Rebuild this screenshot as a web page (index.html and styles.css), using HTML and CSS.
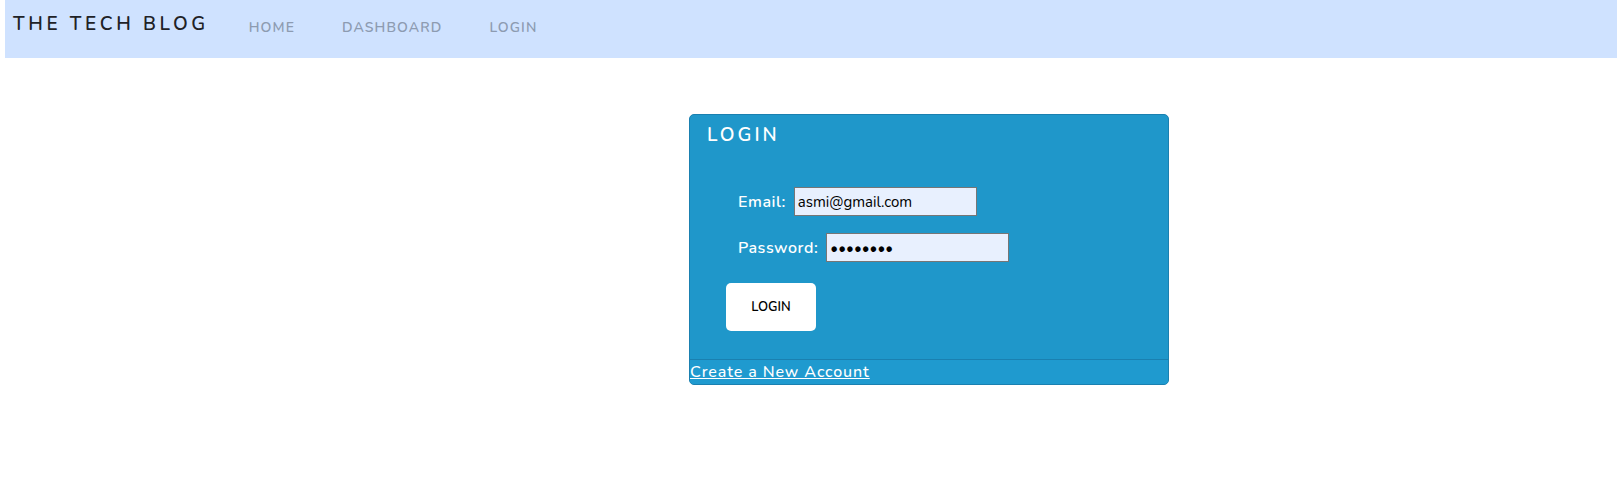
FILE: index.html
```html
<!DOCTYPE html>
<html lang="en">
<head>
<meta charset="utf-8">
<title>The Tech Blog</title>
<link rel="stylesheet" href="styles.css">
</head>
<body>
<header class="topbar">
  <a class="brand" href="#">THE TECH BLOG</a>
  <nav class="menu">
    <a class="menu-link" href="#">HOME</a>
    <a class="menu-link" href="#">DASHBOARD</a>
    <a class="menu-link" href="#">LOGIN</a>
  </nav>
</header>
<main class="main">
  <section class="card">
    <h2 class="card-title">LOGIN</h2>
    <form class="login-form">
      <div class="field">
        <label class="field-label" for="email">Email:</label>
        <input class="field-input email-input" id="email" type="text" value="asmi@gmail.com">
      </div>
      <div class="field">
        <label class="field-label" for="password">Password:</label>
        <input class="field-input" id="password" type="password" value="password">
      </div>
      <button class="login-btn" type="button">LOGIN</button>
    </form>
    <div class="card-footer">
      <a class="signup-link" href="#">Create a New Account</a>
    </div>
  </section>
</main>
</body>
</html>
```
FILE: styles.css
```css
* { box-sizing: border-box; }

body {
  margin: 0;
  font-family: "Nunito", "Lato", "Open Sans", sans-serif;
  background: #ffffff;
}

.topbar {
  margin-left: 5px;
  height: 58px;
  background: #cfe2ff;
  display: flex;
  align-items: flex-start;
  padding-left: 8px;
}

.brand {
  color: #1f2227;
  text-decoration: none;
  font-size: 19px;
  font-weight: 600;
  letter-spacing: 3.6px;
  line-height: 24px;
  padding-top: 12px;
}

.menu {
  display: flex;
  gap: 47px;
  margin-left: 40px;
  padding-top: 18px;
}

.menu-link {
  color: #8d9bb1;
  text-decoration: none;
  font-size: 14px;
  font-weight: 600;
  letter-spacing: 1.1px;
  line-height: 20px;
}

.main {
  padding-top: 56px;
  padding-left: 689px;
}

.card {
  width: 480px;
  background: #1f97ca;
  border: 1px solid #1a80b0;
  border-radius: 5px;
  color: #ffffff;
}

.card-title {
  margin: 0;
  padding: 7px 0 0 17px;
  font-size: 19px;
  font-weight: 600;
  letter-spacing: 3px;
  line-height: 26px;
}

.login-form {
  padding: 39px 0 28px 36px;
}

.field {
  display: flex;
  align-items: center;
  gap: 8px;
  margin-left: 12px;
  margin-bottom: 17px;
}

.field-label {
  font-size: 16px;
  font-weight: 600;
  letter-spacing: 0.55px;
}

.field-input {
  width: 183px;
  height: 29px;
  border: 1px solid #767676;
  background: #e8f0fe;
  font-family: inherit;
  font-size: 15px;
  color: #000;
  padding: 2px 3px;
}

.login-btn {
  margin-top: 4px;
  width: 90px;
  height: 48px;
  border: none;
  border-radius: 5px;
  background: #ffffff;
  font-family: inherit;
  font-size: 13px;
  font-weight: 600;
  color: #000;
}

.card-footer {
  border-top: 1px solid #1a80b0;
  height: 25px;
  line-height: 24px;
  background: #1f9acf;
  border-radius: 0 0 4px 4px;
}

.signup-link {
  color: #ffffff;
  font-size: 16px;
  font-weight: 500;
  letter-spacing: 0.9px;
}
```
